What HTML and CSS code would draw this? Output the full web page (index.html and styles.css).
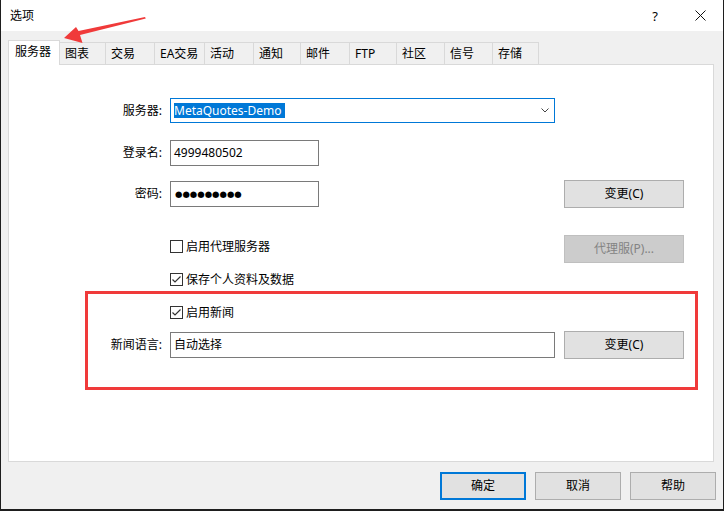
FILE: index.html
```html
<!DOCTYPE html>
<html lang="zh-CN">
<head>
<meta charset="utf-8">
<title>选项</title>
<link rel="stylesheet" href="styles.css">
</head>
<body>
<div class="window">
  <div class="titlebar">
    <span class="title">选项</span>
    <span class="tb-btn tb-help">?</span>
    <span class="tb-btn tb-close">
      <svg width="11" height="11" viewBox="0 0 11 11"><path d="M0.5 0.5 L10.5 10.5 M10.5 0.5 L0.5 10.5" stroke="#111" stroke-width="1" fill="none"/></svg>
    </span>
  </div>
  <div class="body">
    <div class="tabs">
      <div class="tab selected w52">服务器</div>
      <div class="tab w47">图表</div>
      <div class="tab w50">交易</div>
      <div class="tab w51">EA交易</div>
      <div class="tab w50">活动</div>
      <div class="tab w48">通知</div>
      <div class="tab w50">邮件</div>
      <div class="tab w48">FTP</div>
      <div class="tab w49">社区</div>
      <div class="tab w49">信号</div>
      <div class="tab w47">存储</div>
    </div>
    <div class="panel">
      <div class="form">
        <div class="row r1">
          <label class="lbl">服务器:</label>
          <div class="combo">
            <span class="sel">MetaQuotes-Demo</span>
            <svg class="chev" width="8" height="5" viewBox="0 0 8 5"><path d="M0.5 0.5 L4 4 L7.5 0.5" stroke="#444" stroke-width="1" fill="none"/></svg>
          </div>
        </div>
        <div class="row r2">
          <label class="lbl">登录名:</label>
          <div class="field">
            <div class="input short">4999480502</div>
          </div>
        </div>
        <div class="row r3">
          <label class="lbl">密码:</label>
          <div class="field">
            <div class="input short dots">●●●●●●●●●</div>
          </div>
          <div class="btn">变更(C)</div>
        </div>
        <div class="row r4">
          <span></span>
          <div class="check-cell top">
            <span class="cb"></span><span class="cb-text">启用代理服务器</span>
          </div>
          <div class="btn disabled">代理服(P)...</div>
        </div>
        <div class="row r5">
          <span></span>
          <div class="check-cell">
            <span class="cb"><svg width="11" height="11" viewBox="0 0 11 11"><path d="M1.5 5.5 L4 8 L9.5 2.5" stroke="#333" stroke-width="1.2" fill="none"/></svg></span><span class="cb-text">保存个人资料及数据</span>
          </div>
        </div>
        <div class="row r6">
          <span></span>
          <div class="check-cell">
            <span class="cb"><svg width="11" height="11" viewBox="0 0 11 11"><path d="M1.5 5.5 L4 8 L9.5 2.5" stroke="#333" stroke-width="1.2" fill="none"/></svg></span><span class="cb-text">启用新闻</span>
          </div>
        </div>
        <div class="row r7">
          <label class="lbl">新闻语言:</label>
          <div class="field">
            <div class="input wide">自动选择</div>
          </div>
          <div class="btn">变更(C)</div>
        </div>
      </div>
      <div class="highlight"></div>
    </div>
    <div class="actions">
      <div class="dbtn default">确定</div>
      <div class="dbtn">取消</div>
      <div class="dbtn">帮助</div>
    </div>
  </div>
  <svg class="arrow" width="100" height="40" viewBox="0 0 100 40">
    <polygon points="9,23 21,12 23.5,16 90,2 90.8,3.5 25,20 27.5,28" fill="#f03a3a"/>
  </svg>
</div>
</body>
</html>
```

FILE: styles.css
```css
* { box-sizing: border-box; }
html, body { margin: 0; padding: 0; }
body {
  background: #1e1e1e;
  font-family: "Noto Sans", "Noto Sans CJK SC", sans-serif;
  font-size: 12px;
  line-height: 16px;
  color: #000;
}
.window {
  position: relative;
  margin-left: 1px;
  width: 722px;
  height: 509px;
  background: #f0f0f0;
  display: flex;
  flex-direction: column;
}
.titlebar {
  height: 31px;
  background: #fff;
  display: flex;
  align-items: center;
  padding-left: 9px;
}
.title { flex: 1; }
.tb-btn {
  height: 31px;
  display: flex;
  align-items: center;
  justify-content: center;
}
.tb-help { width: 46px; font-size: 13px; }
.tb-close { width: 45px; }
.body {
  padding: 9px 9px 0 7px;
  display: flex;
  flex-direction: column;
}
.tabs {
  display: flex;
  align-items: flex-end;
  height: 24px;
}
.tab {
  height: 22px;
  border: 1px solid #d9d9d9;
  border-bottom: none;
  margin-left: -1px;
  padding-left: 5px;
  display: flex;
  align-items: center;
  background: #f0f0f0;
}
.tab.selected {
  height: 25px;
  margin-left: 0;
  margin-bottom: -1px;
  background: #fff;
  padding-left: 6px;
  padding-bottom: 2px;
  position: relative;
  z-index: 1;
}
.w52 { width: 52px; }
.w51 { width: 51px; }
.w50 { width: 50px; }
.w49 { width: 49px; }
.w48 { width: 48px; }
.w47 { width: 47px; }
.panel {
  position: relative;
  width: 706px;
  height: 398px;
  border: 1px solid #d9d9d9;
  background: #fff;
}
.form {
  padding-top: 33px;
  display: flex;
  flex-direction: column;
}
.row {
  display: grid;
  grid-template-columns: 153px 385px 121px;
  column-gap: 8px;
  align-items: center;
}
.row > :nth-child(3) { margin-left: 1px; }
.r1 { height: 25px; }
.r2 { height: 26px; margin-top: 17px; }
.r3 { height: 28px; margin-top: 14px; }
.r4 { height: 28px; margin-top: 27px; }
.r5 { height: 13px; margin-top: 10px; }
.r6 { height: 13px; margin-top: 20px; }
.r7 { height: 28px; margin-top: 12px; }
.lbl {
  text-align: right;
  white-space: nowrap;
}
.combo {
  height: 25px;
  border: 1px solid #0078d7;
  display: flex;
  align-items: center;
  padding-left: 3px;
  padding-right: 5px;
  justify-content: space-between;
}
.sel {
  background: #0078d7;
  color: #fff;
  height: 15px;
  line-height: 15px;
  padding: 0 3px 0 0;
}
.chev { display: block; }
.field { display: flex; }
.input {
  height: 26px;
  border: 1px solid #7a7a7a;
  padding-left: 3px;
  display: flex;
  align-items: center;
  background: #fff;
}
.input.short { width: 149px; }
.input.wide { width: 385px; }
.dots {
  font-family: "DejaVu Sans", sans-serif;
  font-size: 8.5px;
  letter-spacing: 0;
  padding-left: 4px;
}
.btn {
  height: 28px;
  border: 1px solid #adadad;
  background: #e1e1e1;
  display: flex;
  align-items: center;
  justify-content: center;
}
.btn.disabled {
  background: #cccccc;
  border-color: #bfbfbf;
  color: #838383;
}
.check-cell {
  display: flex;
  align-items: center;
  height: 13px;
}
.check-cell.top { align-self: start; margin-top: 5px; }
.cb {
  width: 13px;
  height: 13px;
  border: 1px solid #333;
  background: #fff;
  display: flex;
  align-items: center;
  justify-content: center;
  flex: none;
}
.cb svg { display: block; }
.cb-text { margin-left: 3px; white-space: nowrap; }
.highlight {
  position: absolute;
  left: 76px;
  top: 226px;
  width: 613px;
  height: 99px;
  border: 3px solid #f03a3a;
  pointer-events: none;
}
.actions {
  display: flex;
  justify-content: flex-end;
  gap: 9px;
  margin-top: 10px;
  margin-right: -2px;
}
.dbtn {
  width: 86px;
  height: 28px;
  border: 1px solid #adadad;
  background: #e1e1e1;
  display: flex;
  align-items: center;
  justify-content: center;
}
.dbtn.default {
  border: 2px solid #0078d7;
}
.arrow {
  position: absolute;
  left: 54px;
  top: 15px;
}
```
